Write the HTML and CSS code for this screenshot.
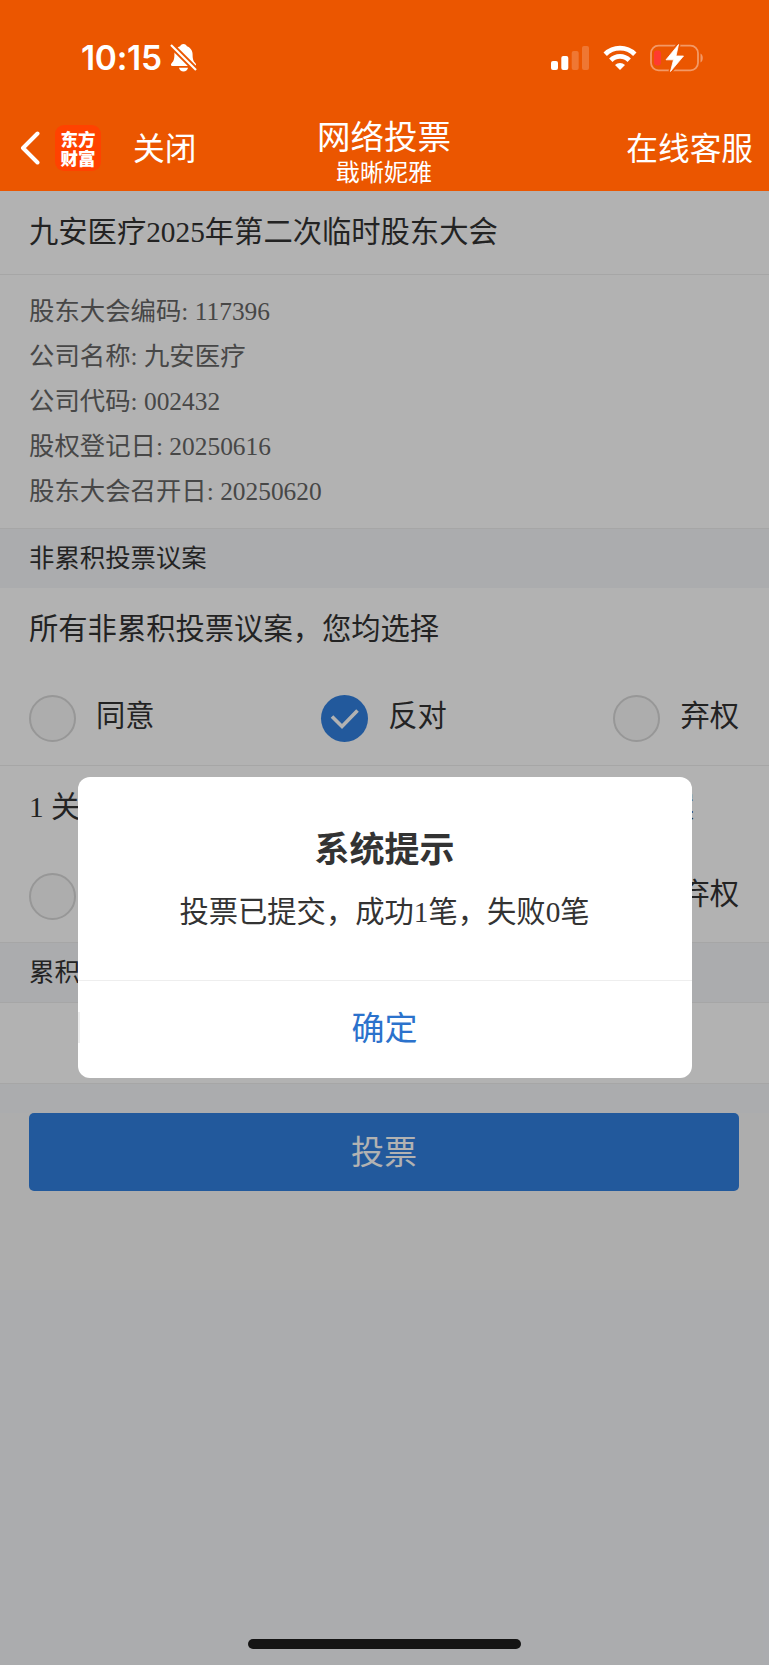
FILE: index.html
```html
<!DOCTYPE html>
<html lang="zh">
<head>
    <meta charset="UTF-8">
    <meta name="viewport" content="width=device-width, initial-scale=1.0">
    <title>网络投票</title>
    <link rel="stylesheet" href="styles.css">
</head>
<body>
    <div class="header">
        <div class="status-bar">
            <span class="time">10:15</span>
            <svg class="bell" width="27" height="30" viewBox="0 0 27 30">
                <path d="M13.500 1c-1.900 0-3 1-3.400 2.300C6.500 4.600 4.400 7.600 4.400 11.500c0 5-1 6.800-2.600 8.500C.5 21.400.6 23 2.500 23h22c1.900 0 2-1.600.7-3-1.600-1.700-2.600-3.500-2.600-8.500 0-3.900-2.100-6.900-5.700-8.200C16.500 2 15.400 1 13.500 1z" fill="#fff"/>
                <path d="M9 24.800h9c-.4 2.300-2.200 3.700-4.500 3.700S9.400 27.100 9 24.800z" fill="#fff"/>
                <path d="M1 2L26 27" stroke="#eb5600" stroke-width="6"/>
                <path d="M1 2L26 27" stroke="#fff" stroke-width="2.200"/>
            </svg>
            <div class="status-right">
                <svg class="signal" width="39" height="26" viewBox="0 0 39 26">
                    <g fill="#fff">
                        <rect x="0" y="16" width="7" height="9" rx="2"/>
                        <rect x="10.300" y="11" width="7" height="14" rx="2"/>
                        <rect x="20.700" y="6" width="7" height="19" rx="2" opacity=".2"/>
                        <rect x="31" y="1" width="7" height="24" rx="2" opacity=".2"/>
                    </g>
                </svg>
                <svg class="wifi" width="34" height="26" viewBox="0 0 34 26">
                    <g fill="none" stroke="#fff" stroke-width="4.800">
                        <path d="M2.200 9.300a21 21 0 0 1 29.600 0"/>
                        <path d="M7.800 15.200a13 13 0 0 1 18.400 0"/>
                    </g>
                    <path d="M17 25l-5-5a7.200 7.200 0 0 1 10 0z" fill="#fff"/>
                </svg>
                <svg class="battery" width="54" height="28" viewBox="0 0 54 28">
                    <rect x="1" y="1.700" width="47" height="24.600" rx="7.500" fill="none" stroke="#fff" stroke-opacity=".4" stroke-width="1.800"/>
                    <path d="M50.500 9.500c3 1.500 3 7.500 0 9z" fill="#fff" opacity=".4"/>
                    <rect x="4" y="6.500" width="7" height="15" rx="3" fill="#ff3b30"/>
                    <path d="M28.500.5L16 15.800h7.500L20.500 27.500 33.500 12h-7.500z" fill="#fff" stroke="#eb5600" stroke-width="4"/>
                    <path d="M28.500.5L16 15.800h7.500L20.500 27.500 33.500 12h-7.500z" fill="#fff" stroke="#fff" stroke-width=".8" stroke-linejoin="round"/>
                </svg>
            </div>
        </div>
        <div class="nav-bar">
            <div class="nav-left">
                <svg class="back" width="20" height="34" viewBox="0 0 20 34">
                    <path d="M17.500 2.500L3 17l14.500 14.500" fill="none" stroke="#fff" stroke-width="4" stroke-linecap="round" stroke-linejoin="round"/>
                </svg>
                <div class="logo">东方<br>财富</div>
                <span class="close">关闭</span>
            </div>
            <div class="nav-center">
                <div class="nav-title">网络投票</div>
                <div class="nav-sub">戢晰妮雅</div>
            </div>
            <div class="nav-right">在线客服</div>
        </div>
    </div>

    <div class="main">
        <div class="meeting-title">九安医疗2025年第二次临时股东大会</div>
        <div class="meeting-info">
            <p>股东大会编码: 117396</p>
            <p>公司名称: 九安医疗</p>
            <p>公司代码: 002432</p>
            <p>股权登记日: 20250616</p>
            <p>股东大会召开日: 20250620</p>
        </div>

        <div class="section">非累积投票议案</div>
        <div class="proposal">
            <div class="proposal-name">所有非累积投票议案，您均选择</div>
            <div class="options">
                <div class="option"><i class="radio"></i>同意</div>
                <div class="option">
                    <i class="radio checked">
                        <svg width="47" height="47" viewBox="0 0 47 47"><path d="M11 21.500L21 31.500L36.500 15.500" fill="none" stroke="#fff" stroke-width="3.600"/></svg>
                    </i>反对
                </div>
                <div class="option"><i class="radio"></i>弃权</div>
            </div>
        </div>
        <div class="proposal second">
            <div class="proposal-name"><span>1 关</span><span class="name-end">案</span></div>
            <div class="options">
                <div class="option"><i class="radio"></i></div>
                <div class="option"><i class="radio"></i>弃权</div>
            </div>
        </div>

        <div class="section line">累积投票议案</div>
        <div class="empty"></div>

        <div class="submit">
            <div class="submit-btn">投票</div>
        </div>
    </div>

    <!-- 遮罩和弹窗 -->
    <div class="mask">
        <div class="dialog">
            <div class="dialog-body">
                <div class="dialog-title">系统提示</div>
                <div class="dialog-text">投票已提交，成功1笔，失败0笔</div>
            </div>
            <div class="dialog-btn">确定</div>
        </div>
    </div>
    <div class="home-bar"></div>
</body>
</html>
```
FILE: styles.css
```css
* {
    box-sizing: border-box;
}

body {
    margin: 0;
    height: 1665px;
    position: relative;
    overflow: hidden;
    background-color: #f5f7fa;
    font-family: 'Liberation Serif', 'Noto Sans CJK SC', serif;
    color: #333;
}

/* 顶部 */
.header {
    height: 191px;
    background-color: #eb5600;
    color: #fff;
    font-family: 'Noto Sans CJK SC', sans-serif;
}

.status-bar {
    height: 104px;
    padding: 11px 65px 0 81px;
    display: flex;
    align-items: center;
}

.time {
    font-family: 'Inter', sans-serif;
    font-size: 33.5px;
    font-weight: 600;
    letter-spacing: -0.3px;
    width: 89px;
}

.status-right {
    margin-left: auto;
    display: flex;
    align-items: center;
}

.wifi {
    margin: 0 13px 0 13px;
}

.nav-bar {
    height: 87px;
    padding: 0 16px 0 20px;
    display: grid;
    grid-template-columns: 1fr 134px 1fr;
    align-items: center;
    font-size: 31.7px;
}

.nav-left {
    display: flex;
    align-items: center;
}

.logo {
    width: 46px;
    height: 46px;
    margin: 0 32px 0 15px;
    padding-top: 4px;
    border-radius: 9px;
    background-color: #ff4200;
    text-align: center;
    font-family: 'Noto Sans CJK SC', sans-serif;
    font-size: 17.5px;
    font-weight: 900;
    line-height: 19px;
}

.close {
    margin-bottom: 4px;
}

.nav-center {
    margin-left: -5px;
    padding-top: 7px;
    text-align: center;
    white-space: nowrap;
}

.nav-title {
    font-size: 33.5px;
    line-height: 39px;
}

.nav-sub {
    font-size: 24px;
    line-height: 33px;
}

.nav-right {
    margin-bottom: 4px;
    text-align: right;
}

/* 会议信息 */
.meeting-title {
    height: 84px;
    padding: 0 29px;
    background-color: #fff;
    border-bottom: 1px solid #eee;
    font-size: 29.3px;
    line-height: 83px;
}

.meeting-info {
    height: 253px;
    padding: 14px 29px;
    background-color: #fff;
    color: #666;
    font-size: 25.4px;
    line-height: 45px;
}

.meeting-info p {
    margin: 0;
}

.section {
    height: 60px;
    padding: 0 29px;
    border-top: 1px solid #eee;
    font-size: 25.4px;
    line-height: 58px;
}

.section.line {
    height: 61px;
    border-bottom: 1px solid #eee;
}

/* 议案 */
.proposal {
    height: 177px;
    padding: 0 30px 0 29px;
    background-color: #fff;
    font-size: 29.3px;
}

.second {
    border-top: 1px solid #eee;
}

.proposal-name {
    height: 83px;
    line-height: 82px;
    display: flex;
    justify-content: space-between;
}

.name-end {
    margin-right: 45px;
}

.options {
    height: 94px;
    line-height: 90px;
    display: flex;
    justify-content: space-between;
}

.option {
    display: flex;
}

.radio {
    width: 47px;
    height: 47px;
    margin: 24px 20px 0 0;
    border: 2px solid #d8d8d8;
    border-radius: 50%;
    background-color: #f8f8f8;
}

.radio.checked {
    border: none;
    background-color: #3180e0;
}

.radio svg {
    display: block;
}

.empty {
    height: 81px;
    background-color: #fff;
    border-bottom: 1px solid #eee;
}

/* 提交按钮 */
.submit {
    margin-top: 29px;
    height: 177px;
    padding: 0 30px 0 29px;
    background-color: #f8f8f8;
}

.submit-btn {
    height: 78px;
    border-radius: 5px;
    background-color: #3180e0;
    color: #fff;
    font-size: 33px;
    line-height: 81px;
    text-align: center;
}

/* 弹窗 */
.mask {
    position: absolute;
    top: 191px;
    left: 0;
    right: 0;
    bottom: 0;
    padding-top: 586px;
    background-color: rgba(0, 0, 0, 0.3);
}

.dialog {
    width: 614px;
    height: 301px;
    margin: 0 auto;
    border-radius: 12px;
    background-color: #fff;
    text-align: center;
}

.dialog-body {
    height: 204px;
    padding-top: 49px;
    border-bottom: 1px solid #eee;
}

.dialog-title {
    font-size: 35px;
    font-weight: bold;
    line-height: 50px;
}

.dialog-text {
    margin-top: 14px;
    font-size: 29.3px;
    line-height: 44px;
}

/* 按钮左侧的短分隔线 */
.dialog-btn {
    background: linear-gradient(#eee, #eee) no-repeat 0 31px / 2px 31px;
    color: #2b72cc;
    font-size: 33px;
    line-height: 97px;
}

.home-bar {
    position: absolute;
    left: 248px;
    bottom: 16px;
    width: 273px;
    height: 10px;
    border-radius: 5px;
    background-color: #141414;
}
```
